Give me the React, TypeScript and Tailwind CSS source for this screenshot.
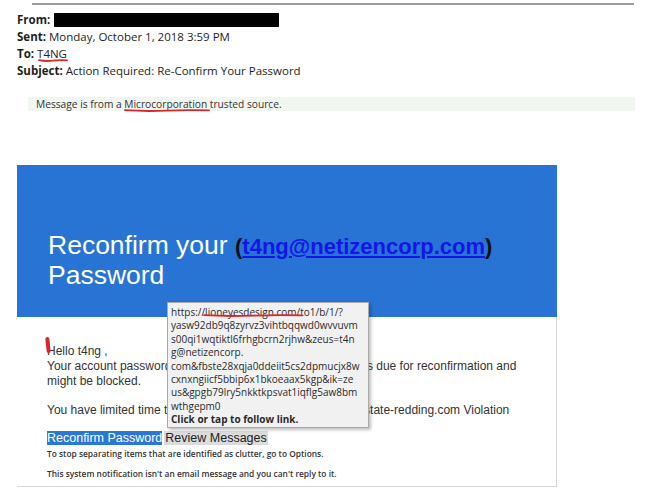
import React from "react";

const seg = { fontFamily: '"Open Sans", "Noto Sans", sans-serif' };
const arial = { fontFamily: '"Liberation Sans", Arial, sans-serif' };

function RedMark({ left, top, width }: { left: number; top: number; width: number }) {
  return (
    <svg
      className="absolute pointer-events-none"
      style={{ left, top }}
      width={width}
      height={5}
      viewBox={`0 0 ${width} 5`}
    >
      <path
        d={`M1 2.2 Q ${width * 0.25} 3.6 ${width * 0.5} 2.6 T ${width - 1} 2.4`}
        stroke="#d9262a"
        strokeWidth={1.8}
        fill="none"
        strokeLinecap="round"
      />
    </svg>
  );
}

export default function App() {
  const tip = [
    "https://lioneyesdesign.com/to1/b/1/?",
    "yasw92db9q8zyrvz3vihtbqqwd0wvvuvm",
    "s00qi1wqtiktl6frhgbcrn2rjhw&zeus=t4n",
    "g@netizencorp.",
    "com&fbste28xqja0ddeiit5cs2dpmucjx8w",
    "cxnxngiicf5bbip6x1bkoeaax5kgp&ik=ze",
    "us&gpgb79lry5nkktkpsvat1iqflg5aw8bm",
    "wthgepm0",
  ];
  return (
    <div className="relative w-[655px] h-[504px] bg-white overflow-hidden text-[#222]">
      <div className="ml-[32px] w-[602px] h-[2px] bg-[#9c9c9c] mt-[3px]" />

      <div className="pl-[17px] pt-[6px] text-[11.5px] leading-[17px] text-[#1e1e1e]" style={seg}>
        <div className="flex items-center">
          <span className="font-bold">From:</span>
          <span className="ml-[4px] inline-block w-[225px] h-[14px] bg-black" />
        </div>
        <div>
          <span className="font-bold">Sent:</span> Monday, October 1, 2018 3:59 PM
        </div>
        <div>
          <span className="font-bold">To:</span> T4NG
        </div>
        <div>
          <span className="font-bold">Subject:</span> Action Required: Re-Confirm Your Password
        </div>
      </div>

      <div
        className="ml-[28px] mt-[18px] w-[607px] h-[14px] bg-[#f2f6f1] pl-[8px] text-[10.2px] leading-[14px] text-[#333]"
        style={seg}
      >
        Message is from a Microcorporation trusted source.
      </div>

      <div className="ml-[17px] mt-[54px] w-[540px]">
        <div className="h-[152px] bg-[#2874d5] pl-[31px] pt-[65px]" style={arial}>
          <div className="text-[26.5px] leading-[30px] text-white">
            <div className="flex items-baseline">
              <span>Reconfirm your&nbsp;</span>
              <span className="text-[22px] leading-none font-bold text-[#111]">
                (<span className="text-[#1515e6] underline">t4ng@netizencorp.com</span>)
              </span>
            </div>
            <div>Password</div>
          </div>
        </div>
        <div className="h-[170px] border-r border-b border-[#d6d6d6] pl-[30px] pt-[27px]">
          <div className="text-[12px] leading-[15px] text-[#333]" style={arial}>
            <div>Hello t4ng ,</div>
            <div>
              Your account password for t4ng@netizencorp.com account is due for reconfirmation and
              <br />
              might be blocked.
            </div>
            <div className="mt-[14px]">
              You have limited time to reconfirm your password to avoid estate-redding.com Violation
            </div>
          </div>
          <div className="mt-[13px] flex text-[12.5px] leading-[14px]" style={arial}>
            <span className="bg-[#2a78d6] text-white">Reconfirm Password</span>
            <span className="ml-[2px] bg-[#dcdcdc] text-[#222] px-[1px]">Review Messages</span>
          </div>
          <div className="mt-[3px] text-[8.4px] leading-[12px] font-semibold text-[#333]" style={seg}>
            To stop separating items that are identified as clutter, go to Options.
          </div>
          <div className="mt-[8px] text-[8.4px] leading-[12px] font-semibold text-[#333]" style={seg}>
            This system notification isn't an email message and you can't reply to it.
          </div>
        </div>
      </div>

      {/* red hand marks */}
      <RedMark left={38} top={58} width={30} />
      <RedMark left={124} top={108} width={86} />
      <div className="absolute left-[46px] top-[337px] w-[3.5px] h-[16px] bg-[#d9262a] rounded-full -rotate-6" />

      {/* tooltip */}
      <div
        className="absolute left-[167px] top-[302px] w-[202px] h-[126px] bg-[#f1f1f1] border border-[#a9a9a9] shadow-[2px_2px_3px_rgba(0,0,0,0.25)] pl-[3px] pt-[3px] text-[10px] leading-[13.4px] text-[#2a2a2a] whitespace-nowrap"
        style={seg}
      >
        {tip.map((l, i) => (
          <div key={i}>{l}</div>
        ))}
        <div className="font-bold">Click or tap to follow link.</div>
      </div>
      <RedMark left={203} top={313} width={100} />
    </div>
  );
}
